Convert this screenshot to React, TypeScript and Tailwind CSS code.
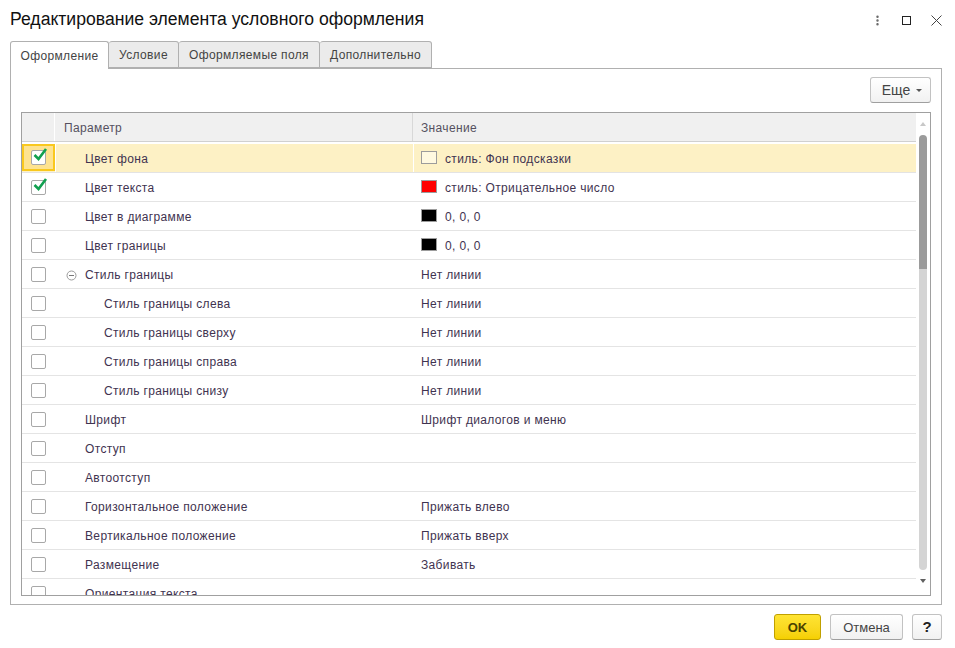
import { MoreVertical } from 'lucide-react';

type Row = {
  name: string;
  value?: string;
  checked?: boolean;
  swatch?: string;
  indent?: boolean;
  tree?: boolean;
};

const ROWS: Row[] = [
  { name: 'Цвет фона', value: 'стиль: Фон подсказки', checked: true, swatch: 'bg-[#fff9e0]' },
  { name: 'Цвет текста', value: 'стиль: Отрицательное число', checked: true, swatch: 'bg-[#ff0000]' },
  { name: 'Цвет в диаграмме', value: '0, 0, 0', swatch: 'bg-black' },
  { name: 'Цвет границы', value: '0, 0, 0', swatch: 'bg-black' },
  { name: 'Стиль границы', value: 'Нет линии', tree: true },
  { name: 'Стиль границы слева', value: 'Нет линии', indent: true },
  { name: 'Стиль границы сверху', value: 'Нет линии', indent: true },
  { name: 'Стиль границы справа', value: 'Нет линии', indent: true },
  { name: 'Стиль границы снизу', value: 'Нет линии', indent: true },
  { name: 'Шрифт', value: 'Шрифт диалогов и меню' },
  { name: 'Отступ' },
  { name: 'Автоотступ' },
  { name: 'Горизонтальное положение', value: 'Прижать влево' },
  { name: 'Вертикальное положение', value: 'Прижать вверх' },
  { name: 'Размещение', value: 'Забивать' },
  { name: 'Ориентация текста' },
];

const TABS = [
  { label: 'Условие', width: 'w-[70px]' },
  { label: 'Оформляемые поля', width: 'w-[141px]' },
  { label: 'Дополнительно', width: 'w-[112px]' },
];

function Check({ checked }: { checked?: boolean }) {
  return (
    <div className="relative w-[15px] h-[15px] rounded-[2px] border border-[#a8a8a8] bg-white">
      {checked && (
        <svg className="absolute left-[1px] top-[-5px]" width="15" height="16" viewBox="0 0 15 16" fill="none">
          <path d="M1.5 9 L5.5 13 L13 3" stroke="#11a050" strokeWidth="2.6" />
        </svg>
      )}
    </div>
  );
}

function TableRow({ row, selected }: { row: Row; selected: boolean }) {
  return (
    <div className={`flex h-[29px] shrink-0 border-b tracking-[0.35px] ${selected ? 'border-[#e3e3e3] bg-[#fdf1c5]' : 'border-[#e4e4e4] bg-white'}`}>
      <div className={`w-[33px] shrink-0 flex items-center justify-center ${selected ? 'h-[27px] border-[2px] border-[#f9c81e] bg-[#fee390]' : ''}`}>
        <Check checked={row.checked} />
      </div>
      <div className={`w-[358px] shrink-0 flex items-center pt-[2px] text-[12px] text-[#3f3350] ${row.indent ? 'pl-[49px]' : selected ? 'pl-[29px]' : 'pl-[30px]'} ${selected ? 'border-l border-white' : ''}`}>
        {row.tree && (
          <svg className="ml-[-19px] mr-[8px]" width="11" height="11" viewBox="0 0 11 11" fill="none">
            <circle cx="5.5" cy="5.5" r="4.5" stroke="#9a9a9a" />
            <path d="M3 5.5 H8" stroke="#777777" />
          </svg>
        )}
        <span className="whitespace-nowrap">{row.name}</span>
      </div>
      <div className={`flex-1 flex items-center pt-[2px] text-[12px] text-[#3f3350] ${selected ? 'pl-[7px] border-l border-white' : 'pl-[8px]'}`}>
        {row.swatch && <span className={`w-[16px] h-[13px] mr-[8px] mt-[-4px] border border-[#9c9c9c] ${row.swatch}`} />}
        <span className="whitespace-nowrap">{row.value}</span>
      </div>
    </div>
  );
}

export default function App() {
  return (
    <div className="w-[955px] h-[648px] bg-white flex flex-col overflow-hidden font-['Liberation_Sans',Arial,sans-serif]">
      {/* Title bar */}
      <div className="h-[41px] shrink-0 flex items-center pl-[10px] pr-[13px]">
        <h1 className="flex-1 text-[17.6px] text-[#111111] whitespace-nowrap pb-[3px]">Редактирование элемента условного оформления</h1>
        <MoreVertical className="w-[13px] h-[13px] text-[#666666] mr-[18px]" strokeWidth={2.5} />
        <div className="w-[9px] h-[9px] border border-[#222222] mr-[20px]" />
        <svg width="11" height="11" viewBox="0 0 11 11" fill="none">
          <path d="M0.5 0.5 L10.5 10.5 M10.5 0.5 L0.5 10.5" stroke="#444444" />
        </svg>
      </div>

      {/* Tabs */}
      <div className="h-[28px] shrink-0 flex pl-[10px] text-[12px] tracking-[0.35px] text-[#444444]">
        <div className="relative z-10 w-[99px] h-[28px] flex items-center justify-center border border-b-0 border-[#b0b0b0] rounded-t-[3px] bg-white">Оформление</div>
        {TABS.map((t) => (
          <div key={t.label} className={`${t.width} h-[27px] flex items-center justify-center border border-l-0 border-[#b0b0b0] rounded-t-[3px] bg-[#ebebeb] whitespace-nowrap`}>
            {t.label}
          </div>
        ))}
      </div>

      {/* Panel */}
      <div className="mt-[-1px] ml-[10px] w-[932px] h-[537px] shrink-0 border border-[#b0b0b0] flex flex-col pt-[8px] pl-[10px] pr-[10px]">
        <div className="flex justify-end h-[26px] shrink-0">
          <button className="w-[61px] h-[26px] pl-[3px] pt-[1px] flex items-center justify-center gap-[6px] rounded-[3px] border border-[#c2c2c2] border-b-[#9f9f9f] bg-gradient-to-b from-white to-[#f1f1f1] text-[14px] text-[#444444]">
            Еще
            <span className="w-0 h-0 border-x-[3px] border-x-transparent border-t-[3px] border-t-[#555555]" />
          </button>
        </div>

        {/* Table */}
        <div className="mt-[9px] w-[910px] h-[484px] shrink-0 border border-[#a0a0a0] flex overflow-hidden">
          <div className="w-[894px] shrink-0 flex flex-col">
            <div className="flex h-[29px] shrink-0 bg-[#f0f0f0] border-b border-[#d0d0d0] text-[12px] tracking-[0.35px] text-[#555060]">
              <div className="w-[33px] shrink-0 border-r border-white" />
              <div className="w-[358px] shrink-0 flex items-center pt-[2px] pl-[9px] border-r border-[#d8d8d8]">Параметр</div>
              <div className="flex-1 flex items-center pt-[2px] pl-[8px]">Значение</div>
            </div>
            <div className="h-[2px] shrink-0 bg-white" />
            {ROWS.map((row, i) => (
              <TableRow key={row.name} row={row} selected={i === 0} />
            ))}
          </div>

          {/* Scrollbar */}
          <div className="flex-1 flex flex-col items-center">
            <span className="mt-[9px] w-0 h-0 border-x-[3px] border-x-transparent border-b-[4px] border-b-[#c8c8c8]" />
            <div className="mt-[9px] w-[8px] h-[134px] rounded-t-[4px] bg-[#9b9b9b] shrink-0" />
            <div className="w-[8px] h-[301px] rounded-b-[4px] bg-[#d4d4d4] shrink-0" />
            <span className="mt-[9px] w-0 h-0 border-x-[3px] border-x-transparent border-t-[4px] border-t-[#606060]" />
          </div>
        </div>
      </div>

      {/* Footer */}
      <div className="flex justify-end pr-[13px] pt-[9px] text-[13px]">
        <button className="w-[47px] h-[26px] pt-[1px] rounded-[3px] border border-[#c0a000] bg-gradient-to-b from-[#ffe433] to-[#f5d000] font-bold text-[#4a4200]">OK</button>
        <button className="ml-[9px] w-[73px] h-[26px] pt-[1px] rounded-[3px] border border-[#c2c2c2] border-b-[#9f9f9f] bg-gradient-to-b from-white to-[#f1f1f1] text-[#444444]">Отмена</button>
        <button className="ml-[9px] w-[30px] h-[26px] pt-[1px] rounded-[3px] border border-[#c2c2c2] border-b-[#9f9f9f] bg-gradient-to-b from-white to-[#f1f1f1] text-[15px] font-bold text-[#222222]">?</button>
      </div>
    </div>
  );
}
